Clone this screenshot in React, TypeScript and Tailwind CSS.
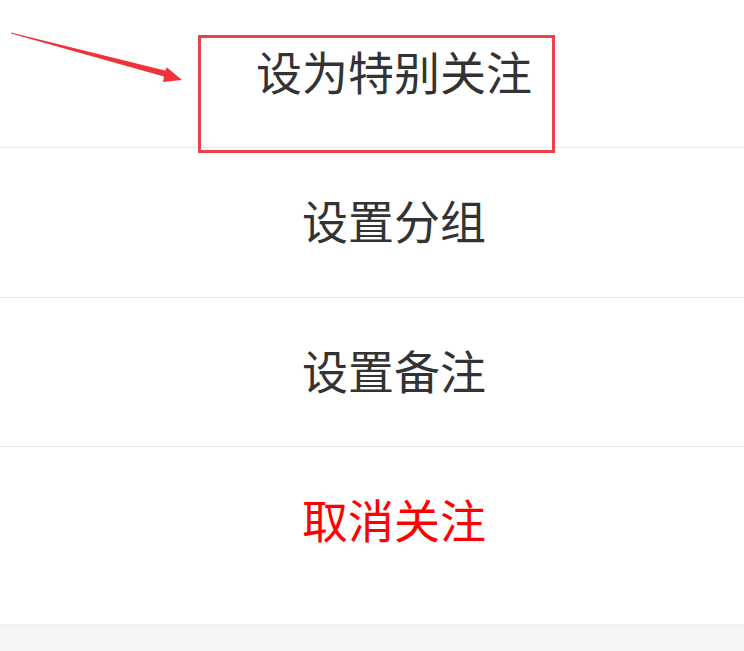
import React from "react";

const rows = [
  { label: "设置分组", h: "h-[150px]" },
  { label: "设置备注", h: "h-[149px]" },
];

export default function App() {
  return (
    <div
      className="relative w-[744px] h-[651px] bg-white overflow-hidden"
      style={{ fontFamily: '"Noto Sans CJK SC", "Noto Sans", sans-serif' }}
    >
      <div className="flex flex-col">
        <div className="h-[148px] border-b border-[#e8e8e8] flex items-center justify-center pl-[44px] pb-[6px] text-[46px] text-[#333333]">
          设为特别关注
        </div>
        {rows.map((r) => (
          <div
            key={r.label}
            className={`${r.h} border-b border-[#e8e8e8] flex items-center justify-center pl-[44px] pb-[6px] text-[46px] text-[#333333]`}
          >
            {r.label}
          </div>
        ))}
        <div className="h-[149px] flex items-center justify-center pl-[44px] pb-[6px] text-[46px] text-[#ff0000]">
          取消关注
        </div>
        <div className="h-[28px] bg-white" />
        <div className="h-[27px] bg-[#f5f5f5] border-t border-[#f0f0f0]" />
      </div>

      {/* annotation box */}
      <div className="absolute left-[198px] top-[35px] w-[357px] h-[118px] border-[3px] border-[#e8424a]" />

      {/* arrow */}
      <svg className="absolute left-0 top-0" width="200" height="100" viewBox="0 0 200 100">
        <polygon
          points="11,32.4 165,70.6 167,67.5 182,80 163,82 164,76.4 11,33.6"
          fill="#f0323a"
        />
      </svg>
    </div>
  );
}
